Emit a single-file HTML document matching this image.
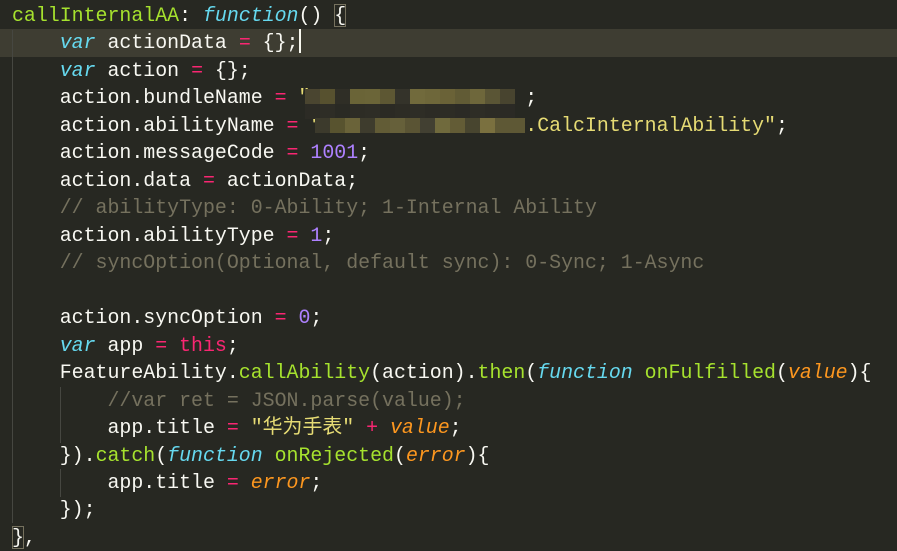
<!DOCTYPE html>
<html><head><meta charset="utf-8"><style>
html,body{margin:0;padding:0;background:#272822;width:897px;height:549px;overflow:hidden}
#c{position:absolute;left:0;top:2px;width:897px;font-family:"Liberation Mono","Noto Sans CJK SC",monospace;font-size:19.9px;line-height:27.47px;color:#f8f8f2}
.l{height:27.47px;padding-left:12px;position:relative;white-space:pre}
.hl{background:#3e3d32}
.g{color:#a6e22e}.k{color:#66d9ef;font-style:italic}.p{color:#f92672}.n{color:#ae81ff}
.o{color:#fd971f;font-style:italic}.cm{color:#75715e}.s{color:#e6db74}
.gd{position:absolute;width:1px;background:#464741}
.blk{position:absolute;height:15px;width:15px}
.box{outline:1px solid #75715e;outline-offset:-1px}
</style></head><body>
<div id="c">
<div class="l"><span class="g">callInternalAA</span>: <span class="k">function</span>() <span class="box">{</span></div>
<div class="l hl">    <span class="k">var</span> actionData <span class="p">=</span> {};<span style="display:inline-block;width:2px;height:24px;background:#f8f8f0;vertical-align:-5px"></span></div>
<div class="l">    <span class="k">var</span> action <span class="p">=</span> {};</div>
<div class="l">    action.bundleName <span class="p">=</span> <span class="s">"</span>                  ;</div>
<div class="l">    action.abilityName <span class="p">=</span> <span class="s">"</span>                 <span class="s">.CalcInternalAbility"</span>;</div>
<div class="l">    action.messageCode <span class="p">=</span> <span class="n">1001</span>;</div>
<div class="l">    action.data <span class="p">=</span> actionData;</div>
<div class="l"><span class="cm">    // abilityType: 0-Ability; 1-Internal Ability</span></div>
<div class="l">    action.abilityType <span class="p">=</span> <span class="n">1</span>;</div>
<div class="l"><span class="cm">    // syncOption(Optional, default sync): 0-Sync; 1-Async</span></div>
<div class="l"> </div>
<div class="l">    action.syncOption <span class="p">=</span> <span class="n">0</span>;</div>
<div class="l">    <span class="k">var</span> app <span class="p">=</span> <span class="p">this</span>;</div>
<div class="l">    FeatureAbility.<span class="g">callAbility</span>(action).<span class="g">then</span>(<span class="k">function</span> <span class="g">onFulfilled</span>(<span class="o">value</span>){</div>
<div class="l"><span class="cm">        //var ret = JSON.parse(value);</span></div>
<div class="l">        app.title <span class="p">=</span> <span class="s">"华为手表"</span> <span class="p">+</span> <span class="o">value</span>;</div>
<div class="l">    }).<span class="g">catch</span>(<span class="k">function</span> <span class="g">onRejected</span>(<span class="o">error</span>){</div>
<div class="l">        app.title <span class="p">=</span> <span class="o">error</span>;</div>
<div class="l">    });</div>
<div class="l"><span class="box">}</span>,</div>
</div>
<div class="gd" style="left:12px;top:30px;height:493px"></div>
<div class="gd" style="left:60px;top:387px;height:56px"></div>
<div class="gd" style="left:60px;top:469px;height:28px"></div>
<div id="b1"></div>
<script>
var r1=["#4a4530","#57512f","#2f2e26","#6a6437","#6b6538","#5d5733","#34332a","#716a3c","#6e673a","#6a6237","#615b35","#6e673b","#5a5535","#48442f"];
var r2=["#2c2b25","#2e2d26","#2a2a24","#2d2c25","#2e2d26","#2b2a24","#2d2c25","#2e2d26","#2c2b25","#2d2c25","#2b2a25","#2e2d26","#2c2b25","#2b2a25"];
var r3=["#3c3a2c","#58532f","#6a6339","#3e3c2d","#625c36","#66603a","#5a5434","#424032","#706a3d","#635c36","#48452f","#7a703f","#5e5835","#5e5835"];
var h="";
function row(a,x,y){for(var i=0;i<a.length;i++)h+='<div class="blk" style="left:'+(x+i*15)+'px;top:'+y+'px;background:'+a[i]+'"></div>';}
row(r1,305,89);row(r2,305,104);row(r3,315,118);
document.getElementById("b1").innerHTML=h;
</script>
</body></html>
